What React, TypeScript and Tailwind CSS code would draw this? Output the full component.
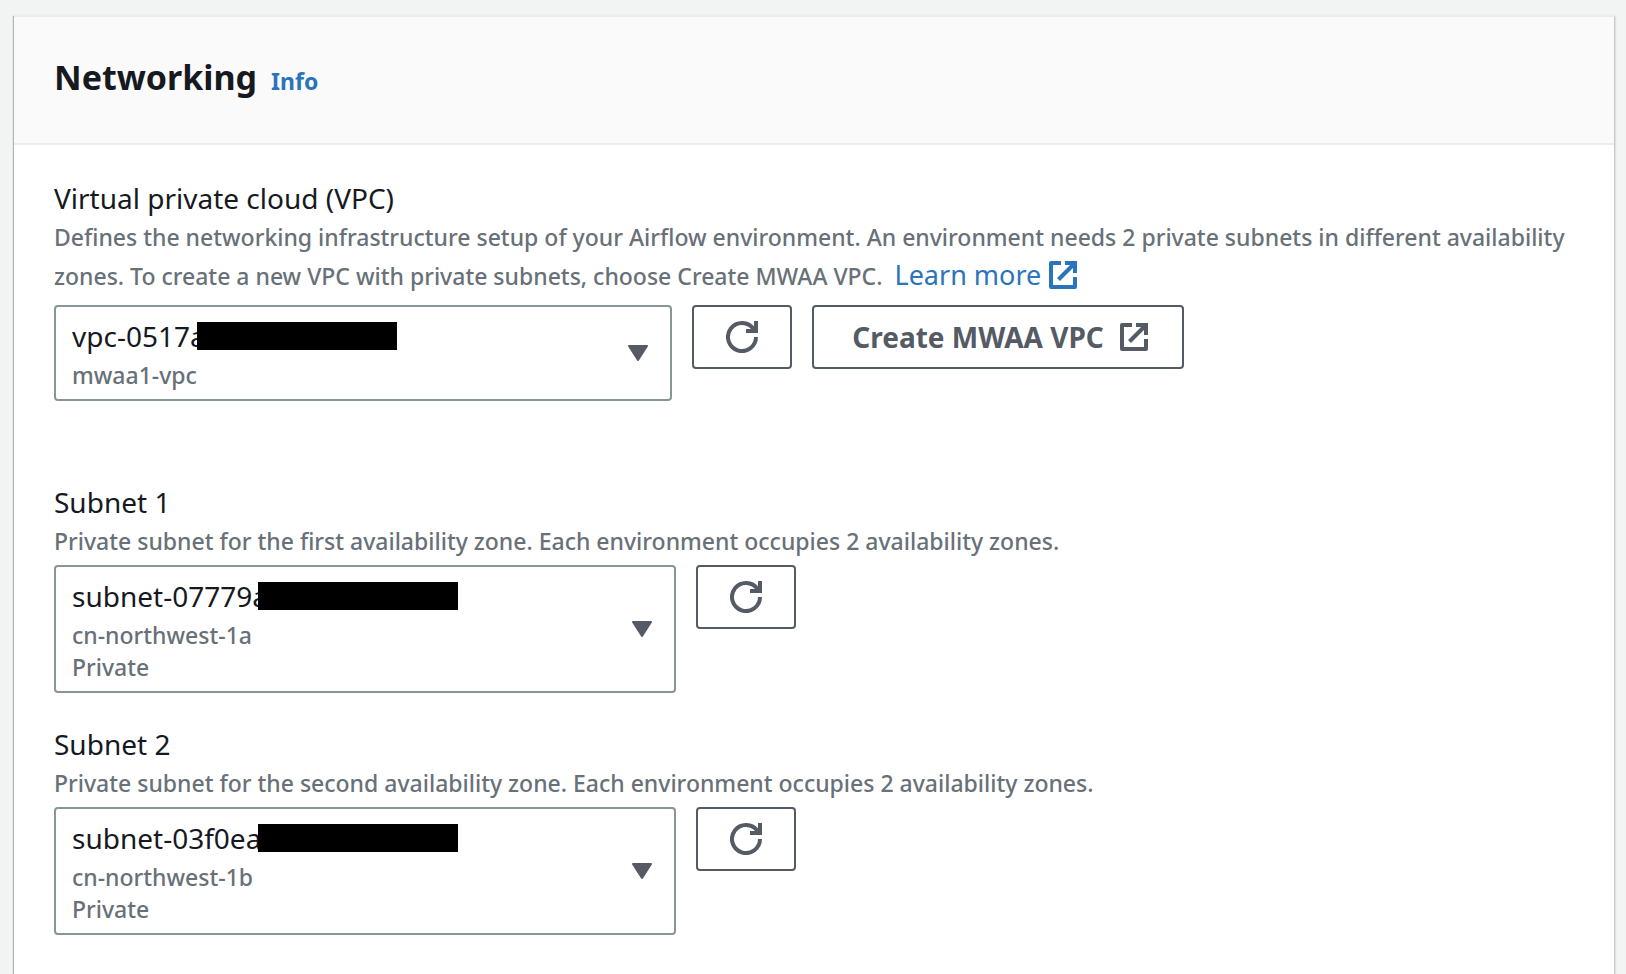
import type { ReactNode } from "react";

function ExternalIcon() {
  return (
    <svg viewBox="0 0 28 28" className="size-7 shrink-0" fill="none" stroke="currentColor" strokeWidth="4" aria-hidden="true">
      <path d="M12 2H2V26H26V16" strokeLinejoin="round" />
      <path d="M16 2H26V12" />
      <path d="M26 2L9.5 18.5" />
    </svg>
  );
}

function RefreshIcon() {
  return (
    <svg viewBox="0 0 32 32" className="size-8" fill="none" stroke="currentColor" strokeWidth="4" aria-hidden="true">
      <path d="M30 16A14 14 0 1 1 27.6 8.2" />
      <path d="M30 0V10H20" />
    </svg>
  );
}

function CaretIcon() {
  return (
    <svg viewBox="0 0 20 16" className="h-4 w-5 text-[#545b64]" fill="currentColor" stroke="currentColor" strokeWidth="2" strokeLinejoin="round" aria-hidden="true">
      <path d="M1 1H19L10 15Z" />
    </svg>
  );
}

function RefreshButton({ label }: { label: string }) {
  return (
    <button
      type="button"
      aria-label={label}
      className="flex h-16 w-[100px] items-center justify-center rounded-sm border-2 border-[#545b64] bg-white text-[#545b64]"
    >
      <RefreshIcon />
    </button>
  );
}

function ResourceSelect({ id, value, details, width, maskOffset }: {
  id: string;
  value: string;
  details: string[];
  width: string;
  maskOffset: string;
}) {
  return (
    <div className={`grid ${width}`}>
      <select
        id={id}
        defaultValue={value}
        className="col-start-1 row-start-1 h-full w-full appearance-none self-stretch rounded-sm border-2 border-[#879596] bg-white px-4 text-[28px] leading-9 text-[#16191f]"
        style={{ paddingTop: 11, paddingBottom: details.length * 32 + 13 }}
      >
        <option value={value}>{value}</option>
      </select>
      <div className="pointer-events-none z-10 col-start-1 row-start-1 flex items-center justify-between pr-6">
        <div className="flex flex-col pt-[17px] pb-[10px] pl-[18px] text-[23px] leading-8 font-medium text-[#687078]">
          <div className={`mb-[9px] h-7 w-[200px] bg-black ${maskOffset}`} />
          {details.map((line) => (
            <span key={line}>{line}</span>
          ))}
        </div>
        <CaretIcon />
      </div>
    </div>
  );
}

function Field({ id, label, description, children }: {
  id: string;
  label: string;
  description: ReactNode;
  children: ReactNode;
}) {
  return (
    <div>
      <label htmlFor={id} className="block text-[28px] leading-10 text-[#16191f]">{label}</label>
      {description}
      <div className="flex flex-wrap items-start gap-5">{children}</div>
    </div>
  );
}

export default function App() {
  return (
    <main className="min-h-screen bg-[#f2f3f3] pt-[15px] pr-3 pl-[14px] font-['Noto_Sans',sans-serif]">
      <section className="min-h-[calc(100vh-15px)] border-t-2 border-[#eaeded] bg-white shadow-[1px_1px_2px_0_#00000040,-1px_1px_1px_0_#00000040]">
        <header className="flex items-baseline gap-[14px] border-b-2 border-[#eaeded] bg-[#fafafa] px-10 pt-[38px] pb-[44px]">
          <h2 className="text-[34px] leading-[44px] font-bold text-[#16191f]">Networking</h2>
          <a href="#info" className="text-[23px] leading-8 font-bold text-[#2a74bb]">Info</a>
        </header>
        <div className="px-10 pt-[33px] pb-10">
          <Field
            id="vpc"
            label="Virtual private cloud (VPC)"
            description={
              <p className="mb-[9px] text-[23px] leading-[39px] font-medium text-[#687078]">
                Defines the networking infrastructure setup of your Airflow environment. An environment needs 2 private subnets in different availability zones. To create a new VPC with private subnets, choose Create MWAA VPC.
                <a href="#learn-more" className="ml-3 inline-flex items-center gap-2 text-[27px] leading-none font-normal text-[#2a74bb]">
                  Learn more <ExternalIcon />
                </a>
              </p>
            }
          >
            <ResourceSelect id="vpc" value="vpc-0517a" details={["mwaa1-vpc"]} width="w-[618px]" maskOffset="ml-[125px]" />
            <RefreshButton label="Refresh VPCs" />
            <button
              type="button"
              className="flex h-16 w-[372px] items-center justify-center gap-4 rounded-sm border-2 border-[#545b64] bg-white pl-1 text-[28px] leading-9 font-bold text-[#545b64]"
            >
              Create MWAA VPC
              <ExternalIcon />
            </button>
          </Field>
          <div className="mt-[81px] flex flex-col gap-[31px]">
            <Field
              id="subnet-1"
              label="Subnet 1"
              description={<p className="mb-1 text-[23px] leading-[39px] font-medium text-[#687078]">Private subnet for the first availability zone. Each environment occupies 2 availability zones.</p>}
            >
              <ResourceSelect id="subnet-1" value="subnet-07779a" details={["cn-northwest-1a", "Private"]} width="w-[622px]" maskOffset="ml-[186px]" />
              <RefreshButton label="Refresh subnet 1" />
            </Field>
            <Field
              id="subnet-2"
              label="Subnet 2"
              description={<p className="mb-1 text-[23px] leading-[39px] font-medium text-[#687078]">Private subnet for the second availability zone. Each environment occupies 2 availability zones.</p>}
            >
              <ResourceSelect id="subnet-2" value="subnet-03f0ea" details={["cn-northwest-1b", "Private"]} width="w-[622px]" maskOffset="ml-[186px]" />
              <RefreshButton label="Refresh subnet 2" />
            </Field>
          </div>
        </div>
      </section>
    </main>
  );
}
